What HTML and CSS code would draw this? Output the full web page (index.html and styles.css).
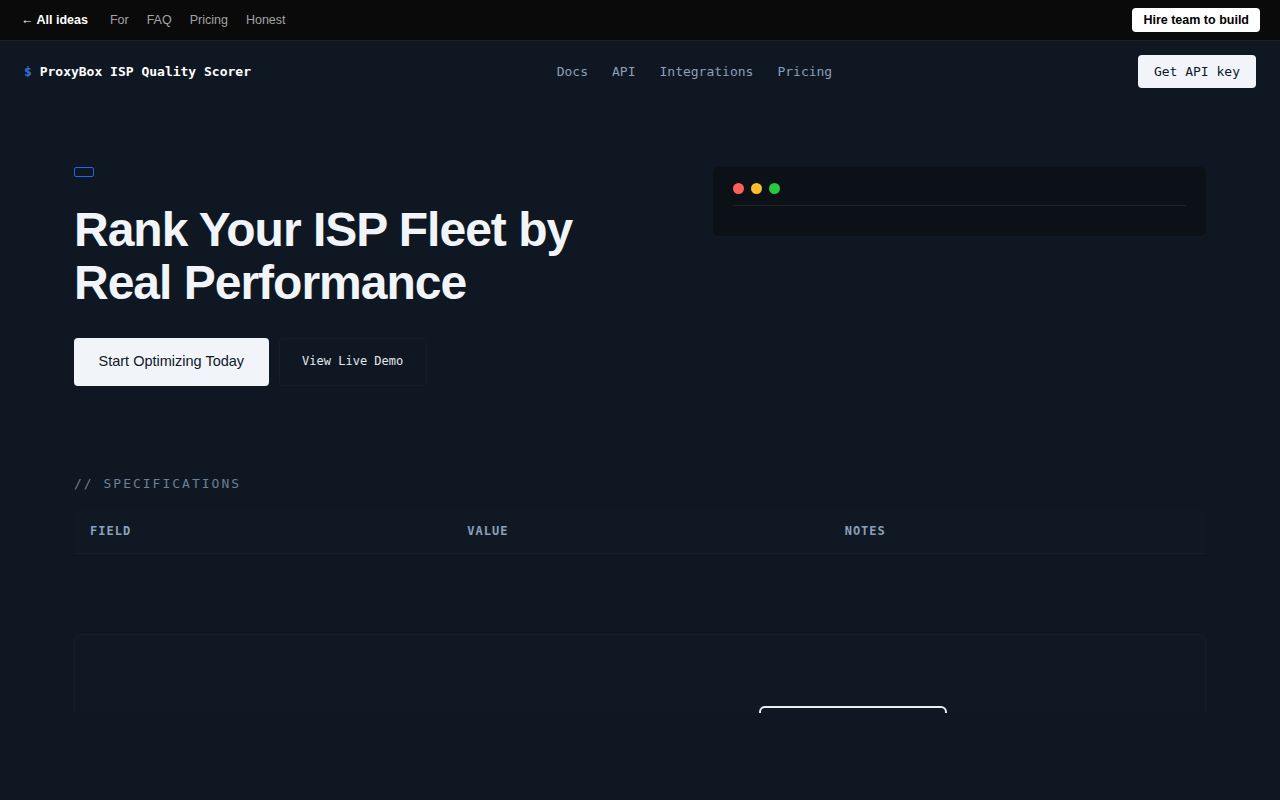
FILE: index.html
```html
<!DOCTYPE html>
<html lang="en">
<head>
  <meta charset="UTF-8">
  <title>ProxyBox ISP Quality Scorer</title>
  <link rel="stylesheet" href="styles.css">
</head>
<body>
  <div class="topbar">
    <div class="topbar-links">
      <a class="back" href="#">&larr; All ideas</a>
      <a href="#">For</a>
      <a href="#">FAQ</a>
      <a href="#">Pricing</a>
      <a href="#">Honest</a>
    </div>
    <a class="hire" href="#">Hire team to build</a>
  </div>

  <header class="site-header">
    <div class="logo"><span class="prompt">$</span> ProxyBox ISP Quality Scorer</div>
    <nav class="main-nav">
      <a href="#">Docs</a>
      <a href="#">API</a>
      <a href="#">Integrations</a>
      <a href="#">Pricing</a>
    </nav>
    <a class="btn-key" href="#">Get API key</a>
  </header>

  <main class="container">
    <section class="hero">
      <div class="hero-copy">
        <span class="badge"></span>
        <h1>Rank Your ISP Fleet by Real Performance</h1>
        <div class="hero-actions">
          <a class="btn-primary" href="#">Start Optimizing Today</a>
          <a class="btn-ghost" href="#">View Live Demo</a>
        </div>
      </div>
      <div class="terminal">
        <div class="terminal-bar">
          <span class="dot red"></span>
          <span class="dot yellow"></span>
          <span class="dot green"></span>
        </div>
        <div class="terminal-body"></div>
      </div>
    </section>

    <section class="specs">
      <h2 class="section-label">// SPECIFICATIONS</h2>
      <table class="spec-table">
        <thead>
          <tr>
            <th>Field</th>
            <th>Value</th>
            <th>Notes</th>
          </tr>
        </thead>
        <tbody></tbody>
      </table>
    </section>

    <section class="cta">
      <a class="btn-outline" href="#"></a>
    </section>
  </main>
</body>
</html>
```

FILE: styles.css
```css
body {
  margin: 0;
  background: #0f1822;
  color: #f1f5f9;
  font-family: "Liberation Sans", Arial, sans-serif;
}
a {
  text-decoration: none;
  color: inherit;
}

/* top strip */
.topbar {
  height: 40px;
  background: #0a0a0a;
  border-bottom: 1px solid #202020;
  display: flex;
  align-items: center;
  justify-content: space-between;
  padding: 0 20px 0 21px;
  font-size: 12.5px;
}
.topbar-links {
  display: flex;
  gap: 18px;
}
.topbar-links a {
  color: #a3a3a3;
}
.topbar-links .back {
  color: #fff;
  font-weight: bold;
  margin-right: 4px;
}
.hire {
  background: #fff;
  color: #000;
  font-weight: bold;
  line-height: 14px;
  padding: 5px 11px;
  border-radius: 4px;
}

/* site header */
.site-header {
  display: flex;
  align-items: center;
  justify-content: space-between;
  padding: 14px 24px;
  font-family: "DejaVu Sans Mono", monospace;
  font-size: 13px;
}
.logo {
  font-weight: bold;
  color: #fff;
}
.prompt {
  color: #3471d8;
}
.main-nav {
  display: flex;
  gap: 24px;
}
.main-nav a {
  color: #8b9fb9;
}
.btn-key {
  background: #f1f5f9;
  color: #0f172a;
  padding: 8px 16px;
  border-radius: 4px;
  line-height: 17px;
}

.container {
  max-width: 1132px;
  margin: 0 auto;
}

/* hero */
.hero {
  display: grid;
  grid-template-columns: 1.2fr 1fr;
  gap: 48px;
  align-items: start;
  padding-top: 65px;
}
.badge {
  display: block;
  width: 18px;
  height: 8px;
  border: 1px solid #2563eb;
  border-radius: 2px;
}
.hero h1 {
  margin: 27px 0 28px;
  font-size: 48px;
  line-height: 1.1;
  letter-spacing: -1px;
  font-weight: bold;
  color: #f1f5f9;
}
.hero-actions {
  display: flex;
  gap: 10px;
}
.btn-primary {
  background: #f1f5f9;
  color: #0f172a;
  font-size: 14.5px;
  line-height: 19px;
  padding: 14.5px 24.5px;
  border-radius: 4px;
}
.btn-ghost {
  font-family: "DejaVu Sans Mono", monospace;
  font-size: 12px;
  line-height: 19px;
  color: #e2e8f0;
  padding: 13.5px 22.5px;
  border: 1px solid #151d27;
  border-radius: 4px;
}

.terminal {
  background: #0c1017;
  border-radius: 6px;
  padding: 16px 20px 30px;
}
.terminal-bar {
  display: flex;
  gap: 7px;
  padding-bottom: 11px;
  border-bottom: 1px solid #1f242c;
}
.dot {
  width: 11px;
  height: 11px;
  border-radius: 50%;
}
.red { background: #ff5f57; }
.yellow { background: #febc2e; }
.green { background: #28c840; }

/* specs */
.specs {
  margin-top: 88px;
}
.section-label {
  margin: 0 0 16px;
  font-family: "DejaVu Sans Mono", monospace;
  font-size: 13px;
  line-height: 20px;
  font-weight: normal;
  letter-spacing: 2px;
  color: #6b7f96;
}
.spec-table {
  width: 100%;
  border-collapse: collapse;
  table-layout: fixed;
}
.spec-table th {
  text-align: left;
  padding: 14px 16px;
  font-family: "DejaVu Sans Mono", monospace;
  font-size: 12px;
  line-height: 15px;
  letter-spacing: 1px;
  text-transform: uppercase;
  color: #8ba0ba;
  background: #101923;
  border-bottom: 1px solid #141d28;
}

/* cta */
.cta {
  margin-top: 80px;
  height: 79px;
  overflow: hidden;
  background: #101923;
  border: 1px solid #151e29;
  border-bottom: none;
  border-radius: 6px 6px 0 0;
  padding: 71px 0 0 684px;
  box-sizing: border-box;
}
.btn-outline {
  display: block;
  width: 184px;
  height: 44px;
  border: 2px solid #e8edf3;
  border-radius: 6px;
}
```
